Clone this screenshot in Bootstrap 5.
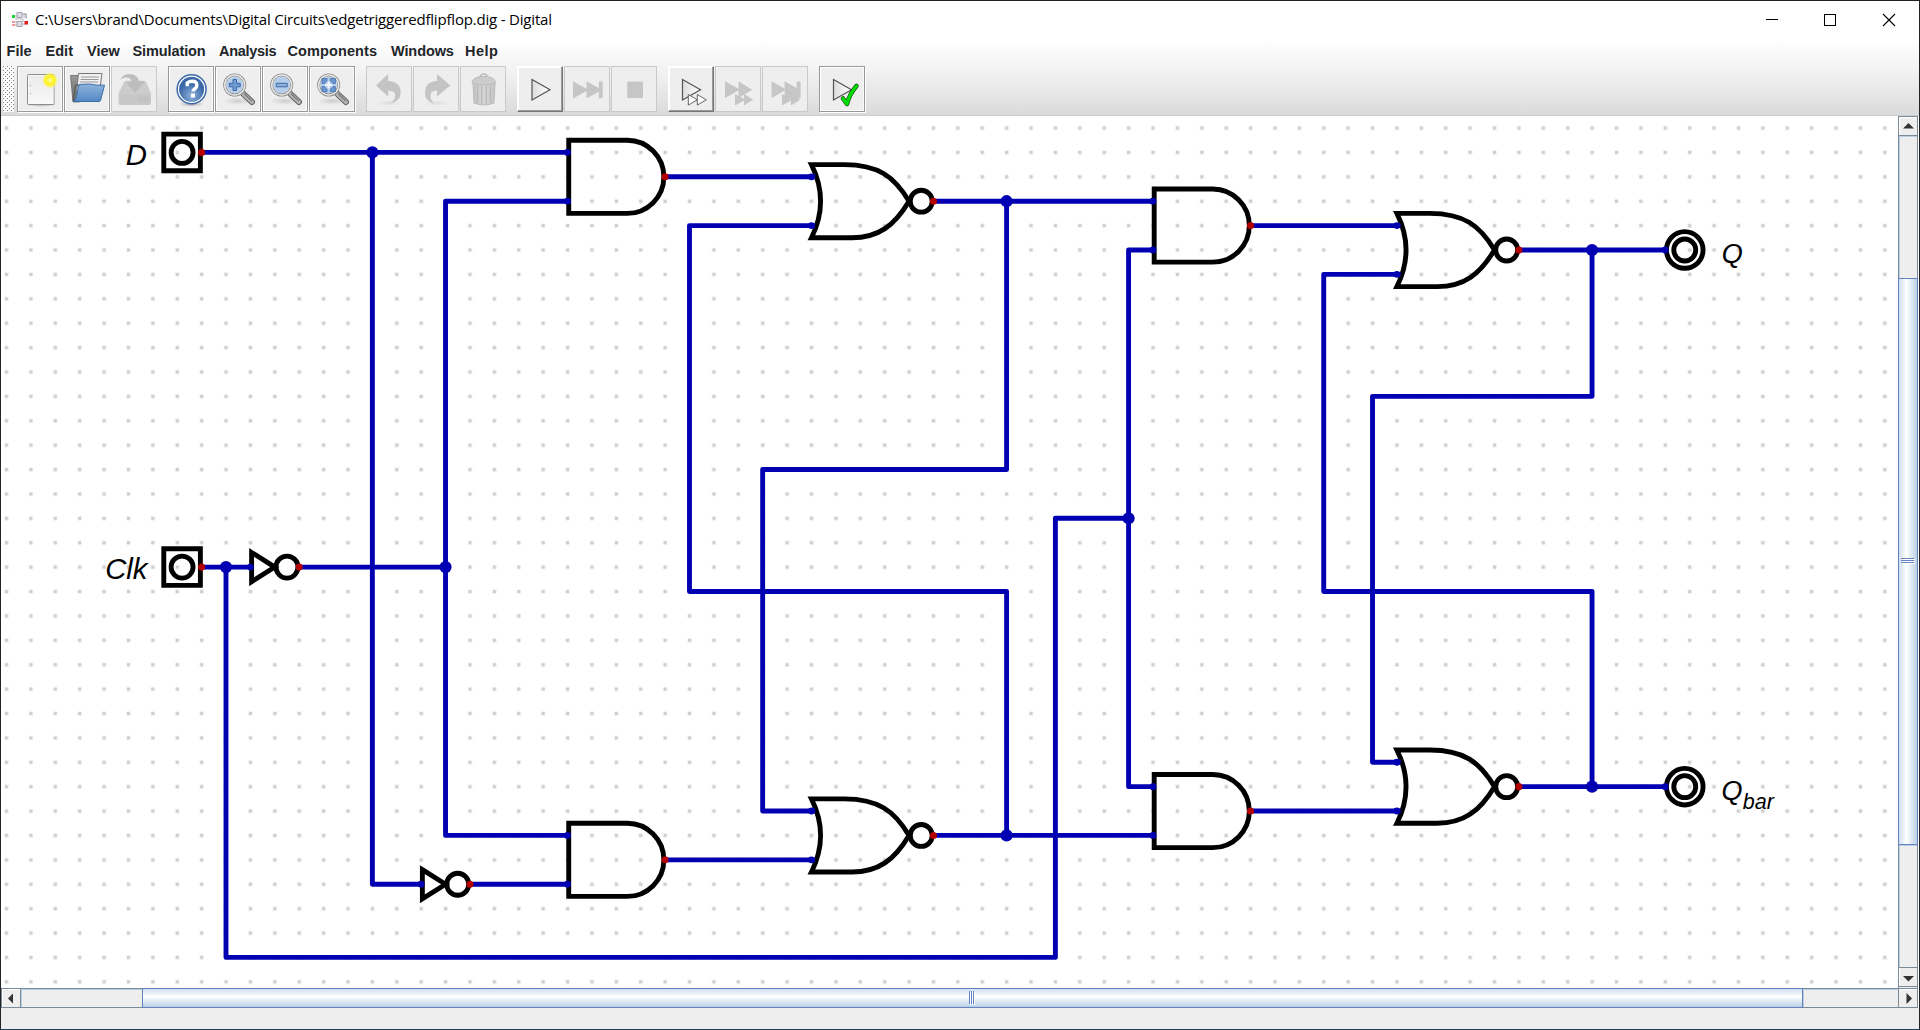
<!DOCTYPE html>
<html lang="en">
<head>
<meta charset="utf-8">
<title>Digital</title>
<link href="https://cdn.jsdelivr.net/npm/bootstrap@5.3.0/dist/css/bootstrap.min.css" rel="stylesheet">
<style>
body{width:1920px;height:1030px;overflow:hidden;background:#fff}
.win{width:1920px;height:1030px;border:1px solid #232323;border-bottom-color:#1b4357}
.titlebar{height:37px;padding:0 2px 0 10px}
.titletext{font:15px/37px "Open Sans","Noto Sans",sans-serif;color:#000;letter-spacing:-.19px;margin-left:6px;white-space:nowrap}
.winbtn{width:58px;height:36px}
.chrome{height:78px;background:linear-gradient(#fff 0,#fff 2px,#f0f0f0 38px,#dadada 100%);border-bottom:1px solid #ccc}
.menus{height:28px;padding-left:5.600px;font:bold 14.500px/26px "Liberation Sans",sans-serif}
.menus a{color:#333;text-decoration:none;flex:none;width:39px}
.menus a:nth-child(2){width:41.400px}
.menus a:nth-child(3){width:45.500px}
.menus a:nth-child(4){width:86.500px;letter-spacing:-.1px}
.menus a:nth-child(5){width:68.500px;letter-spacing:-.3px}
.menus a:nth-child(6){width:103.500px;letter-spacing:.1px}
.menus a:nth-child(7){width:74px;letter-spacing:-.1px}
.menus a:nth-child(8){letter-spacing:.5px}
.tools{height:46px;padding-left:2px}
.grip{width:11px;height:46px;margin-right:3px}
.tbtn{width:46px;height:46px;margin-right:1px;background:#eee;border:1px solid #999;box-shadow:inset 1px 1px 0 #fff,inset -1px -1px 0 #fafafa,1px 1px 0 #fff;padding:0;border-radius:0;display:block}
.tbtn svg{display:block;margin:-1px}
.tbtn:disabled{border-color:#c9c9c9;box-shadow:none}
.tbtn.raised{border-color:#fff #777 #777 #fff;box-shadow:inset -1px -1px 0 #999,inset 1px 1px 0 #fff}
.sep{margin-right:11px}
.board{width:1897px;height:872px;display:block}
.vbar{width:20px;height:872px;border:1px solid #7a8a99;border-bottom:0;background:#eee}
.hbar{width:1917px;height:20px;border:1px solid #7a8a99;background:#eee;box-shadow:0 1px 0 #cbdcf0}
.arrow{background:#eee;box-shadow:inset 1px 1px 0 #fff}
.vbar .arrow{width:18px;height:19px}
.hbar .arrow{width:19px;height:18px}
.vtrack{box-shadow:inset 1px 1px 0 #b8cfe5}
.vthumb{width:20px;height:567px;margin-left:-1px;border:1px solid #6382bf;background:linear-gradient(90deg,#cfdff0 0,#fff 42%,#b8cfe5 100%)}
.hthumb{width:1661px;height:20px;margin-top:-1px;border:1px solid #6382bf;background:linear-gradient(#cfdff0 0,#fff 42%,#b8cfe5 100%)}
.status{background:#eee}
.lbl{font-family:"Liberation Sans",sans-serif;font-style:italic;fill:#000}
</style>
<script src="https://cdn.jsdelivr.net/npm/bootstrap@5.3.0/dist/js/bootstrap.bundle.min.js"></script>
</head>
<body>
<div class="win d-flex flex-column">
  <header class="titlebar d-flex align-items-center flex-shrink-0">
    <svg width="18" height="20" viewBox="0 0 18 20"><g fill="#dcdce8" stroke="#9c9caa" stroke-width=".9"><rect x="6" y="2.500" width="5" height="5"/><rect x="6" y="11.500" width="5" height="5"/></g><g fill="none" stroke="#99a" stroke-width=".8"><path d="M3 6h3M11 4h4v5M11 14h5M3 12h3M3 15h3M4 9h8v3M15 3v5M13 3v5"/></g><rect x="1" y="5" width="3" height="3" fill="#1fd32f"/><rect x="1" y="11" width="3" height="2" fill="#f29a9a"/><rect x="1" y="14" width="3" height="2" fill="#f29a9a"/><rect x="13.500" y="11" width="3.500" height="3.500" fill="#e01b1b"/></svg>
    <span class="titletext">C:\Users\brand\Documents\Digital Circuits\edgetriggeredflipflop.dig - Digital</span>
    <div class="ms-auto d-flex">
      <svg class="winbtn" viewBox="0 0 58 36"><path d="M23 17.500h12" stroke="#000"/></svg>
      <svg class="winbtn" viewBox="0 0 58 36"><rect x="23.500" y="12.500" width="11" height="11" fill="none" stroke="#000"/></svg>
      <svg class="winbtn" viewBox="0 0 58 36"><path d="M24 12l12 12M36 12l-12 12" stroke="#000" stroke-width="1.100"/></svg>
    </div>
  </header>
  <div class="chrome flex-shrink-0">
    <nav class="menus d-flex"><a>File</a><a>Edit</a><a>View</a><a>Simulation</a><a>Analysis</a><a>Components</a><a>Windows</a><a>Help</a></nav>
    <svg width="0" height="0" class="d-block">
      <defs>
        <linearGradient id="page" x2="0" y2="1"><stop stop-color="#ebebeb"/><stop offset="1" stop-color="#f8f8f8"/></linearGradient>
        <radialGradient id="sun"><stop stop-color="#fffbb0"/><stop offset=".45" stop-color="#fff21e"/><stop offset=".75" stop-color="#fdf23c" stop-opacity=".8"/><stop offset="1" stop-color="#fdf56a" stop-opacity="0"/></radialGradient>
        <linearGradient id="fold" x2="0" y2="1"><stop stop-color="#8fb4dc"/><stop offset="1" stop-color="#5388c6"/></linearGradient>
        <linearGradient id="dark" x2="0" y2="1"><stop stop-color="#9a9a9a"/><stop offset="1" stop-color="#666"/></linearGradient>
        <radialGradient id="ball" cy=".75"><stop stop-color="#8fb3dc"/><stop offset="1" stop-color="#3a68a8"/></radialGradient>
        <radialGradient id="shade"><stop stop-color="#000" stop-opacity=".28"/><stop offset="1" stop-color="#000" stop-opacity="0"/></radialGradient>
        <linearGradient id="tri" x2="1" y2="0"><stop stop-color="#dcdcdc"/><stop offset="1" stop-color="#fff"/></linearGradient>
        <linearGradient id="can" x2="1" y2="0"><stop stop-color="#c2c2c2"/><stop offset=".5" stop-color="#d8d8d8"/><stop offset="1" stop-color="#c4c4c4"/></linearGradient>
        <pattern id="bumps" width="4" height="4" patternUnits="userSpaceOnUse"><path d="M0 0h4v4h-4z" fill="#fafafa"/><path d="M0 0h1v1h-1zM2 2h1v1h-1z" fill="#7a7f88"/></pattern>
        <g id="lens">
          <ellipse cx="23" cy="35" rx="15" ry="4" fill="url(#shade)" opacity=".5"/>
          <path d="M28 27.500l9 8.500" stroke="#666" stroke-width="6" stroke-linecap="round"/><path d="M28 27.500l9 8.500" stroke="#b4b4b4" stroke-width="4" stroke-linecap="round"/><path d="M29 27.500l8 7.600" stroke="#777" stroke-width="1.300"/>
          <circle cx="19.700" cy="19" r="10" fill="#dbe7f4" stroke="#8a8a8a" stroke-width="3"/><circle cx="19.700" cy="19" r="10" fill="none" stroke="#e6e6e6" stroke-width="1.500"/><circle cx="19.700" cy="19" r="8" fill="#b3cdea"/>
        </g>
      </defs>
    </svg>
    <div class="tools d-flex">
      <svg class="grip" viewBox="0 0 11 46"><path d="M0 0h11v46h-11z" fill="url(#bumps)"/></svg>
      <button class="tbtn"><svg width="46" height="46"><ellipse cx="24" cy="38.500" rx="16" ry="2.500" fill="url(#shade)"/><rect x="10.500" y="8.500" width="26.500" height="30" rx="1" fill="url(#page)" stroke="#8c8c8c"/><path d="M11.500 9.500h24.500v28h-24.500z" fill="none" stroke="#fafafa" stroke-width=".8"/><circle cx="13.500" cy="19.500" r=".8" fill="#bbb"/><circle cx="13.500" cy="27.500" r=".8" fill="#bbb"/><circle cx="33" cy="14.300" r="8" fill="url(#sun)"/></svg></button>
      <button class="tbtn"><svg width="46" height="46"><path d="M6.500 9.500h7l2 3v23.500h-6.500z" fill="url(#dark)" stroke="#666" stroke-width=".8"/><path d="M14.500 7.500h23.500l-2.500 18h-23z" fill="#f0f0f0" stroke="#777"/><path d="M17 11h18M16.500 13.500h18M16 16h18" stroke="#999" stroke-width="1.200"/><path d="M16.500 19h-5l-2.500 16" stroke="#555" fill="none"/><path d="M14.500 20q.2-1.500 2-1.600l9-.4q6 1.500 15 1.200l-4 15.300q-.3 1-1.500 1h-26q3-1 3.500-5z" fill="url(#fold)" stroke="#3d6ca8"/></svg></button>
      <button class="tbtn sep" disabled><svg width="46" height="46"><path d="M13 16q1-1.300 2.500-1.300h17q1.500 0 2.500 1.300l5 11.500v9.500q0 2-2 2h-28.500q-2 0-2-2v-9.500z" fill="#ccc"/><path d="M8.500 28.500h31v8.500q0 1.500-2 1.500h-27q-2 0-2-1.500z" fill="#c6c6c6"/><path d="M9 14q3-6 9-6 9 0 10 7.500h6l-10 11.500-9-11h5.500q-.5-5-6-4.500-3 .2-5.500 2.500z" fill="#bdbdbd"/><path d="M29 31v4M31.500 31v4M34 31v4M36.500 31v4" stroke="#bbb"/></svg></button>
      <button class="tbtn"><svg width="46" height="46"><ellipse cx="23.500" cy="38" rx="13" ry="3" fill="url(#shade)"/><circle cx="23.600" cy="23.300" r="14.500" fill="#fff" stroke="#3c69a8" stroke-width="1.500"/><circle cx="23.600" cy="23.300" r="12.500" fill="url(#ball)"/><path d="M19.200 20.200v-3.200q2-1.700 5-1.700 4.700 0 4.700 3.900 0 2.300-2.300 3.800-1.500 1-1.500 2.500" fill="none" stroke="#fff" stroke-width="3.400"/><rect x="23" y="27.500" width="4" height="4" fill="#fff"/></svg></button>
      <button class="tbtn"><svg width="46" height="46"><use href="#lens"/><path d="M18 13.500h3.500v3.800h3.700v3.500h-3.700v3.700h-3.500v-3.700h-3.700v-3.500h3.700z" fill="#6f9bd2" stroke="#3c69a8"/></svg></button>
      <button class="tbtn"><svg width="46" height="46"><use href="#lens"/><path d="M14.300 17.300h10.900v3.500h-10.900z" fill="#8fb3dc" stroke="#3c69a8"/></svg></button>
      <button class="tbtn sep"><svg width="46" height="46"><use href="#lens"/><g fill="#6a97d0" stroke="#3c69a8" stroke-width=".7"><path d="M13 17.500v-5h5v2.500l-2.500 2.500z"/><path d="M26.400 17.500v-5h-5v2.500l2.500 2.500z"/><path d="M13 20.700v5h5v-2.500l-2.500-2.500z"/><path d="M26.400 20.700v5h-5v-2.500l2.500-2.500z"/></g><path d="M19.700 15.500v7M16.200 19h7" stroke="#eef4fb" stroke-width="2.200"/></svg></button>
      <button class="tbtn" disabled><svg width="46" height="46"><ellipse cx="23" cy="37" rx="12" ry="3" fill="url(#shade)" opacity=".25"/><path d="M10 19.400l12.200-11.500v7q12.500.5 12.500 12 0 8-11 10.500 5.500-3.500 5.500-8 0-4.500-7-4.800v6z" fill="#c4c4c4"/></svg></button>
      <button class="tbtn" disabled><svg width="46" height="46"><ellipse cx="24" cy="37" rx="12" ry="3" fill="url(#shade)" opacity=".25"/><path d="M37.400 19.400l-13.400-11.500v7q-12 .5-12 12 0 8 9 10.500-3.500-3.500-3.500-8 0-4.500 6.500-4.800v6z" fill="#c4c4c4"/></svg></button>
      <button class="tbtn sep" disabled><svg width="46" height="46"><path d="M13 17h22l-1 20q-10 4-20 0z" fill="url(#can)" stroke="#bbb"/><path d="M17.500 20v17M21.800 20v18M26.200 20v18M30.500 20v17" stroke="#b9b9b9" stroke-width="1.300"/><path d="M20.500 11q0-3 3.300-3t3.300 3" fill="none" stroke="#bbb" stroke-width="1.500"/><path d="M12 17q0-5 8-6.500h7.500q8 1.500 8 6.500-11 4-23.500 0z" fill="#ccc" stroke="#bbb"/></svg></button>
      <button class="tbtn raised"><svg width="46" height="46"><path d="M15 13.500l18 10.200-18 10.300z" fill="url(#tri)" stroke="#555" stroke-width="1.200"/></svg></button>
      <button class="tbtn" disabled><svg width="46" height="46" fill="#c6c6c6"><path d="M9 15.200l13.500 7.500v-7.500l12.300 6.800v-6.500h3.900v16.700h-3.900v-6.500l-12.300 6.800v-7.500l-13.500 7.500z"/></svg></button>
      <button class="tbtn sep" disabled><svg width="46" height="46"><rect x="16.200" y="15.600" width="15.800" height="16.400" fill="#c6c6c6"/></svg></button>
      <button class="tbtn raised"><svg width="46" height="46"><path d="M14.500 13.500l18 10.200-18 10.300z" fill="url(#tri)" stroke="#555" stroke-width="1.200"/><path d="M20.300 28.500l9 5.300-9 5.300zM29.300 28.500l9 5.300-9 5.300z" fill="#fff" stroke="#666"/></svg></button>
      <button class="tbtn" disabled><svg width="46" height="46" fill="#c6c6c6"><path d="M10 15.200l13.500 7.500v-7.500l13.700 8.500-13.700 8.200v-7.500l-13.500 7.500zM20 28l9 5v-5l9.200 5.800-9.200 5.700v-5l-9 5z"/></svg></button>
      <button class="tbtn sep" disabled><svg width="46" height="46" fill="#c6c6c6"><path d="M9.600 15.200l13 7.500v-7.500l12 6.800v-6.500h4v16.700h-4l-12-.3v-7.500l-13 7.500zM20 28l9 5v-5l9.200 5.800-9.200 5.700v-5l-9 5z"/></svg></button>
      <button class="tbtn"><svg width="46" height="46"><path d="M14.500 13.500l18 10.200-18 10.300z" fill="url(#tri)" stroke="#555" stroke-width="1.200"/><path d="M24 32.500l4 5.500q2.500-10 9.500-18" fill="none" stroke="#155a15" stroke-width="4.500" stroke-linecap="round" stroke-linejoin="round"/><path d="M24 32.500l4 5.500q2.500-10 9.500-18" fill="none" stroke="#0d0" stroke-width="3" stroke-linecap="round" stroke-linejoin="round"/></svg></button>
    </div>
  </div>
  <main class="d-flex flex-shrink-0">
    <svg class="board" viewBox="0 0 1897 872">
      <defs>
        <pattern id="grid" width="20" height="20" patternUnits="userSpaceOnUse" x="-10" y="-10"><rect x="8.600" y="8.600" width="2.900" height="2.900" fill="#d0d0d0"/></pattern>
        <g id="and"><path d="M1-10H49A30 30 0 0 1 49 50H1z"/><g class="pin"><circle r="2.800"/><circle cy="40" r="2.800"/></g><circle class="po" cx="80" cy="20" r="2.900"/></g>
        <g id="nor"><path d="M0-10H27C55-10 68 0 80 20C68 40 55 50 33 50H0C10 30 10 10 0-10z"/><circle cx="90" cy="20" r="9"/><path class="stub" d="M0 0H3M0 40H3"/><g class="pin"><circle r="2.800"/><circle cy="40" r="2.800"/></g><circle class="po" cx="100" cy="20" r="2.900"/></g>
        <g id="inv"><path d="M1-12L20 0L1 12z"/><circle cx="30" r="9"/><circle class="pin" r="2.800"/><circle class="po" cx="40" r="2.900"/></g>
        <g id="inp"><path d="M-31-15H-1V15H-31z"/><circle cx="-16" r="9"/><circle class="po" r="2.900"/></g>
        <g id="outp"><circle cx="16" r="15"/><circle cx="16" r="9"/><circle class="pin" r="2.800"/></g>
      </defs>
      <style>.pin{fill:#0000b2;stroke:none}.po{fill:#b20000;stroke:none}.stub{stroke:#0000b2}</style>
      <g transform="translate(200.600,36.400) scale(1.2197)">
        <rect x="-163" y="-28" width="1550" height="712" fill="url(#grid)"/>
        <g transform="scale(20)" fill="none" stroke="#0000b2" stroke-width=".2" stroke-linecap="round" stroke-linejoin="round">
          <path d="M0 0H15M7 0V30H9M11 30H15M0 17H2M4 17H10M15 2H10V28H15M1 17V33H35V15H38M39 4H38V26H39M19 1H25M25 3H20V18H33V28M30 2H39M33 2V13H23V27H25M19 29H25M30 28H39M43 3H49M49 5H46V18H57V26M54 4H60M57 4V10H48V25H49M43 27H49M54 26H60"/>
        </g>
        <g fill="#0000b2"><circle cx="140" r="5"/><circle cx="20" cy="340" r="5"/><circle cx="200" cy="340" r="5"/><circle cx="660" cy="40" r="5"/><circle cx="660" cy="560" r="5"/><circle cx="760" cy="300" r="5"/><circle cx="1140" cy="80" r="5"/><circle cx="1140" cy="520" r="5"/></g>
        <g fill="none" stroke="#000" stroke-width="4">
          <use href="#inp"/><use href="#inp" y="340"/>
          <use href="#inv" x="40" y="340"/><use href="#inv" x="180" y="600"/>
          <use href="#and" x="300"/><use href="#and" x="300" y="560"/><use href="#and" x="780" y="40"/><use href="#and" x="780" y="520"/>
          <use href="#nor" x="500" y="20"/><use href="#nor" x="500" y="540"/><use href="#nor" x="980" y="60"/><use href="#nor" x="980" y="500"/>
          <use href="#outp" x="1200" y="80"/><use href="#outp" x="1200" y="520"/>
        </g>
      </g>
      <g class="lbl" font-size="29.300">
        <text x="146" y="49" text-anchor="end">D</text>
        <text x="146.500" y="463" text-anchor="end">Clk</text>
        <text x="1720.800" y="146.500" font-size="27">Q</text>
        <text x="1720.500" y="683.500" font-size="27">Q</text>
        <text x="1741.800" y="693" font-size="21.500">bar</text>
      </g>
    </svg>
    <div class="vbar d-flex flex-column">
      <svg class="arrow" viewBox="0 0 18 19"><path d="M4 11.500h11l-5.500-5.500z" fill="#333"/><path d="M0 18.500h18" stroke="#7a8a99"/></svg>
      <div class="vtrack" style="height:142px"></div>
      <div class="vthumb d-flex align-items-center justify-content-center"><svg width="14" height="7"><path d="M0 .5h13M0 2.500h13M0 4.500h13" stroke="#6382bf"/><path d="M1 1.500h13M1 3.500h13M1 5.500h13" stroke="#fff"/></svg></div>
      <div class="vtrack flex-grow-1"></div>
      <svg class="arrow" viewBox="0 0 18 21" style="height:21px"><path d="M4 9h11l-5.500 5.500z" fill="#333"/><path d="M0 .5h18M0 19.500h18" stroke="#7a8a99"/></svg>
    </div>
  </main>
  <div class="hbar d-flex flex-shrink-0">
    <svg class="arrow" viewBox="0 0 19 18"><path d="M11 4.500v10l-5-5z" fill="#333"/><path d="M18.500 0v18" stroke="#7a8a99"/></svg>
    <div class="vtrack" style="width:121px"></div>
    <div class="hthumb d-flex align-items-center justify-content-center"><svg width="7" height="14"><path d="M.5 0v13M2.500 0v13M4.500 0v13" stroke="#6382bf"/><path d="M1.500 1v13M3.500 1v13M5.500 1v13" stroke="#fff"/></svg></div>
    <div class="vtrack flex-grow-1"></div>
    <svg class="arrow" viewBox="0 0 19 18"><path d="M8.500 4v11l5.500-5.500z" fill="#333"/><path d="M.5 0v18" stroke="#7a8a99"/></svg>
  </div>
  <footer class="status flex-grow-1"></footer>
</div>
</body>
</html>
